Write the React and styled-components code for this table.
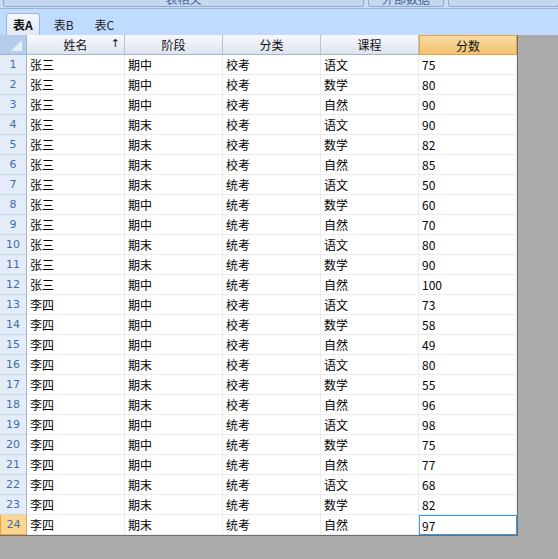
import React from 'react';
import styled, { createGlobalStyle, css } from 'styled-components';

const rows = [
	['张三', '期中', '校考', '语文', '75'],
	['张三', '期中', '校考', '数学', '80'],
	['张三', '期中', '校考', '自然', '90'],
	['张三', '期末', '校考', '语文', '90'],
	['张三', '期末', '校考', '数学', '82'],
	['张三', '期末', '校考', '自然', '85'],
	['张三', '期末', '统考', '语文', '50'],
	['张三', '期中', '统考', '数学', '60'],
	['张三', '期中', '统考', '自然', '70'],
	['张三', '期末', '统考', '语文', '80'],
	['张三', '期末', '统考', '数学', '90'],
	['张三', '期中', '统考', '自然', '100'],
	['李四', '期中', '校考', '语文', '73'],
	['李四', '期中', '校考', '数学', '58'],
	['李四', '期中', '校考', '自然', '49'],
	['李四', '期末', '校考', '语文', '80'],
	['李四', '期末', '校考', '数学', '55'],
	['李四', '期末', '校考', '自然', '96'],
	['李四', '期中', '统考', '语文', '98'],
	['李四', '期中', '统考', '数学', '75'],
	['李四', '期中', '统考', '自然', '77'],
	['李四', '期末', '统考', '语文', '68'],
	['李四', '期末', '统考', '数学', '82'],
	['李四', '期末', '统考', '自然', '97'],
];

const columns = ['姓名', '阶段', '分类', '课程', '分数'];
const activeCol = 4;
const activeRow = 23;

const App = () => (
	<>
		<GlobalStyle />
		<Ribbon>
			<RibbonButton $width={361}><span>表相关</span></RibbonButton>
			<RibbonButton $width={76}><span>外部数据</span></RibbonButton>
			<RibbonButton $width={111} />
		</Ribbon>
		<TabStrip>
			<Tab $active>表A</Tab>
			<Tab>表B</Tab>
			<Tab>表C</Tab>
		</TabStrip>
		<Sheet>
			<Corner>
				<CornerMark />
			</Corner>
			{columns.map((c, i) => (
				<ColHeader key={c} $active={i === activeCol}>
					{c}
					{i === 0 ? <SortArrow>↑</SortArrow> : null}
				</ColHeader>
			))}
			{rows.map((r, ri) => (
				<React.Fragment key={ri}>
					<RowHeader $active={ri === activeRow}>{ri + 1}</RowHeader>
					{r.map((v, ci) => (
						<Cell key={ci} $selected={ri === activeRow && ci === activeCol}>
							{v}
						</Cell>
					))}
				</React.Fragment>
			))}
		</Sheet>
	</>
);

const GlobalStyle = createGlobalStyle`
	html, body {
		margin: 0;
		padding: 0;
		background: #ababab;
		font-family: 'Noto Sans CJK SC', 'DejaVu Sans', sans-serif;
		font-size: 12px;
	}
`;

const Ribbon = styled.div`
	display: flex;
	gap: 4px;
	height: 8px;
	padding-left: 3px;
	background: #c8dcf2;
	border-bottom: 1px solid #9bb1cc;
	overflow: hidden;
`;

const RibbonButton = styled.div`
	width: ${p => p.$width}px;
	flex-shrink: 0;
	height: 7px;
	background: #c5d8ef;
	border: 1px solid #8fa9cb;
	border-top: none;
	border-radius: 0 0 3px 3px;
	box-sizing: border-box;
	display: flex;
	justify-content: center;
	align-items: flex-end;
	overflow: hidden;
	color: #4a6a99;

	span {
		font-size: 12px;
		line-height: 12px;
		margin-bottom: 1px;
	}
`;

const TabStrip = styled.div`
	display: flex;
	align-items: flex-end;
	height: 26px;
	padding-left: 6px;
	background: #bfdbff;
`;

const Tab = styled.div`
	height: 22px;
	display: flex;
	align-items: center;
	padding: 0 8px;
	margin-right: 5px;
	box-sizing: border-box;
	color: #222;
	font-size: 12px;
	${p =>
		p.$active &&
		css`
			background: linear-gradient(#f4f8fd, #dfe9f5);
			border: 1px solid #99b7de;
			border-bottom: none;
			border-radius: 3px 3px 0 0;
			font-weight: bold;
			color: #111;
			padding: 0 6px;
			margin-right: 6px;
		`}
`;

const Sheet = styled.div`
	display: grid;
	grid-template-columns: 27px repeat(5, 98px);
	grid-auto-rows: 20px;
	width: 518px;
	background: #fff;
	border-right: 1px solid #6e6e6e;
	border-bottom: 1px solid #6e6e6e;
	box-sizing: border-box;
`;

const Corner = styled.div`
	position: relative;
	background: #b5cde9;
	border-right: 1px solid #9eb6ce;
	border-bottom: 1px solid #9eb6ce;
`;

const CornerMark = styled.div`
	position: absolute;
	right: 4px;
	bottom: 3px;
	width: 0;
	height: 0;
	border-left: 11px solid transparent;
	border-bottom: 11px solid #e9eff7;
`;

const ColHeader = styled.div`
	position: relative;
	display: flex;
	align-items: center;
	justify-content: center;
	color: #111;
	background: linear-gradient(#f8f9fc, #dde4ef);
	border-right: 1px solid #b4c3d6;
	border-bottom: 1px solid #9eb6ce;
	${p =>
		p.$active &&
		css`
			background: linear-gradient(#f9daa2, #f2c370);
			border: 1px solid #f0a040;
		`}
`;

const SortArrow = styled.span`
	position: absolute;
	right: 4px;
	top: 2px;
	font-size: 11px;
	font-family: 'DejaVu Sans', sans-serif;
`;

const RowHeader = styled.div`
	display: flex;
	align-items: center;
	justify-content: center;
	color: #3d6fab;
	font-family: 'DejaVu Sans', sans-serif;
	font-size: 11px;
	background: #e4ecf7;
	border-right: 1px solid #9eb6ce;
	border-bottom: 1px solid #c5d5e8;
	${p =>
		p.$active &&
		css`
			background: #fcd58e;
			border: 1px solid #f0a040;
			border-top: none;
		`}
`;

const Cell = styled.div`
	display: flex;
	align-items: center;
	padding-left: 3px;
	color: #000;
	border-right: 1px solid #ececec;
	border-bottom: 1px solid #ececec;
	overflow: hidden;
	white-space: nowrap;
	${p =>
		p.$selected &&
		css`
			border: 1px solid #3a96e8;
			padding-left: 2px;
		`}
`;

export default App;
